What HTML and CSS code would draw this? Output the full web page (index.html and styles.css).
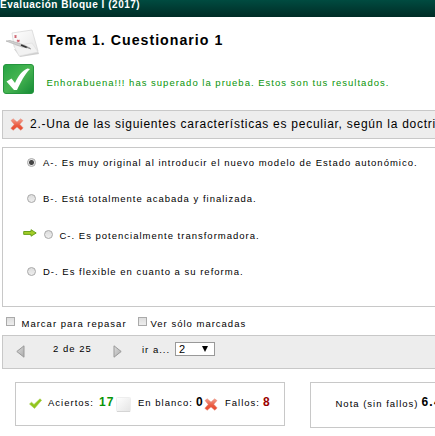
FILE: index.html
```html
<!DOCTYPE html>
<html lang="es">
<head>
<meta charset="utf-8">
<title>Evaluación Bloque I (2017)</title>
<link rel="stylesheet" href="styles.css">
</head>
<body>
<svg class="defs" width="0" height="0" aria-hidden="true">
  <defs>
    <linearGradient id="red" x1="0" y1="0" x2="0" y2="1"><stop offset="0" stop-color="#f3a08f"/><stop offset=".55" stop-color="#ea5c43"/><stop offset="1" stop-color="#e8492c"/></linearGradient>
    <linearGradient id="green" x1="0" y1="0" x2="1" y2="1"><stop offset="0" stop-color="#25a343"/><stop offset=".5" stop-color="#48b552"/><stop offset="1" stop-color="#148a35"/></linearGradient>
    <linearGradient id="gray" x1="0" y1="0" x2="1" y2="1"><stop offset="0" stop-color="#ddd"/><stop offset="1" stop-color="#aaa"/></linearGradient>
    <linearGradient id="paper" x1="0" y1="0" x2="1" y2="1"><stop offset="0" stop-color="#fff"/><stop offset="1" stop-color="#e4e4e4"/></linearGradient>
    <symbol id="cross" viewBox="0 0 14 13"><path d="M1 2.5 3.2.8 7 4 10.6.8 13 2.6 9.8 6.3 13.2 10 10.8 12.3 7 9 3.2 12.3.8 10.3 4.2 6.4Z" fill="url(#red)" stroke="#e58b7b" stroke-width=".5" stroke-linejoin="round"/></symbol>
  </defs>
</svg>
<header class="topbar">Evaluación Bloque I (2017)</header>
<section class="heading">
  <svg class="notes" width="36" height="30" viewBox="0 0 36 30">
    <path d="M9 20 15 28 34 25 33 22Z" fill="#bbb" opacity=".7"/>
    <path d="M7 4 27 1 33 22 15 27 9 17Z" fill="url(#paper)" stroke="#d4d4d4" stroke-width=".7"/>
    <path d="M9 17 14 27 33 23 27 14Z" fill="#f2f2f2" stroke="#ddd" stroke-width=".6"/>
    <path d="m9.5 6.5 2 2m0-2-2 2M12 11l2.5 2m0-2-2.5 2" fill="none" stroke="#cf6672" stroke-width="1.3"/>
    <path d="M1 12 5 11.5 19 16 25 19 17 18Z" fill="#d0d0d0" stroke="#aaa" stroke-width=".6"/>
    <path d="M16 16 22 18.5" stroke="#333" stroke-width="1.8"/><path d="m21 18 5 2" stroke="#777" stroke-width=".8"/>
  </svg>
  <h1>Tema 1. Cuestionario 1</h1>
</section>
<section class="success">
  <svg width="31" height="30" viewBox="0 0 31 30">
    <rect x=".5" y=".5" width="30" height="29" rx="2.5" fill="url(#green)" stroke="#25953d"/>
    <path d="M3.5 17.5 8.5 14.5 12 19C15 12 19 7 24.5 4.5L27 5C21 11 18 18 14 26L11 26Z" fill="#fff"/>
  </svg>
  <p>Enhorabuena!!! has superado la prueba. Estos son tus resultados.</p>
</section>
<section class="question">
  <svg width="14" height="13"><use href="#cross"/></svg>
  <h2>2.-Una de las siguientes características es peculiar, según la doctrina</h2>
</section>
<section class="options">
  <label class="option"><span class="radio on"></span><span>A-. Es muy original al introducir el nuevo modelo de Estado autonómico.</span></label>
  <label class="option"><span class="radio"></span><span>B-. Está totalmente acabada y finalizada.</span></label>
  <label class="option correct">
    <svg width="14" height="8" viewBox="0 0 14 8"><path d="M.7 2.5H8V.7L13.2 4 8 7.2V5.4H.7Z" fill="#a3cc28" stroke="#68a01c"/></svg>
    <span class="radio"></span><span>C-. Es potencialmente transformadora.</span></label>
  <label class="option"><span class="radio"></span><span>D-. Es flexible en cuanto a su reforma.</span></label>
</section>
<section class="marks">
  <span class="box"></span><span class="repasar">Marcar para repasar</span>
  <span class="box"></span><span class="marcadas">Ver sólo marcadas</span>
</section>
<nav class="pager">
  <svg class="prev" width="9" height="13" viewBox="0 0 9 13"><path d="M8 .8V12.2L.8 6.5Z" fill="url(#gray)" stroke="#999"/></svg>
  <span class="count">2 de 25</span>
  <svg class="next" width="9" height="13" viewBox="0 0 9 13"><path d="M1 .8V12.2L8.2 6.5Z" fill="url(#gray)" stroke="#999"/></svg>
  <span class="goto">ir a...</span>
  <span class="select">2<svg width="6" height="6" viewBox="0 0 6 6"><path d="M0 0H6L3 6Z"/></svg></span>
</nav>
<section class="results">
  <div class="totals">
    <svg class="tick" width="13" height="11" viewBox="0 0 13 11"><path d="M.5 6 2.5 4.2 5 6.4 11 .8 12.6 2.3 5.5 10.4Z" fill="#91c51c" stroke="#a5cd4d" stroke-width=".6"/></svg>
    <span class="ok">Aciertos:</span><b class="n17">17</b>
    <svg class="blank" width="15" height="15" viewBox="0 0 15 15"><rect x=".5" y=".5" width="14" height="14" rx="1" fill="url(#paper)" stroke="#eee"/><path d="M1 14.5H14" stroke="#d5d5d5"/></svg>
    <span class="empty">En blanco:</span><b class="n0">0</b>
    <svg class="fail" width="14" height="13"><use href="#cross"/></svg>
    <span class="wrong">Fallos:</span><b class="n8">8</b>
  </div>
  <div class="score"><span>Nota (sin fallos)</span><b>6.4</b></div>
</section>
</body>
</html>
```
FILE: styles.css
```css
* { box-sizing: border-box; }
html, body { margin: 0; height: 436px; overflow: hidden; }
body { background: #fff; color: #000; font: 9.5px/14px "Liberation Sans", Arial, sans-serif; letter-spacing: 1px; white-space: nowrap; }
svg { display: block; flex: none; }
span, b, h1, h2, p { flex: none; }
.defs { position: absolute; }
h1, h2, p { margin: 0; }
.topbar { height: 17px; background: linear-gradient(#004b40, #002c26); color: #fff; font-size: 10px; line-height: 9px; font-weight: bold; letter-spacing: .52px; }
.heading { display: flex; height: 47px; padding: 11px 0 0 5px; }
.notes { margin-top: 1px; }
h1 { margin: 3px 0 0 6px; font-size: 14.2px; line-height: 18px; letter-spacing: 1px; }
.success { display: flex; height: 46px; padding-left: 3px; color: #089408; }
.success p { margin: 12px 0 0 12.5px; }
.question { display: flex; align-items: center; height: 29px; margin-left: 2px; padding-left: 7px; border: 1px solid #c8c8c8; border-right: 0; background: #ededed; overflow: hidden; }
.question h2 { margin: -2px 0 0 6px; font-size: 12px; font-weight: normal; letter-spacing: .74px; }
.options { height: 160px; margin: 8px 0 0 2px; padding: 8px 0 0 22.5px; border: 1px solid #c8c8c8; border-right: 0; }
.option { display: flex; align-items: center; height: 14px; margin-bottom: 22.4px; }
.radio { width: 9px; height: 9px; margin: -2px 7px 0 1.5px; border: 1px solid #a8a8a8; border-radius: 50%; background: linear-gradient(#ddd, #eee); }
.radio.on { background: radial-gradient(circle, #444 0 2px, #e6e6e6 3px); }
.correct svg { margin: -6px 5px 0 -2.5px; }
.marks { display: flex; height: 28px; padding: 10px 0 0 6px; }
.box { width: 9px; height: 9px; border: 1px solid #aaa; background: linear-gradient(#ddd, #eee); }
.repasar { width: 105px; margin-left: 6.5px; }
.marcadas { margin-left: 4px; }
.repasar + .box { margin-left: 11px; }
.pager { display: flex; height: 34px; margin-left: 2px; border: 1px solid #c8c8c8; border-right: 0; background: #ededed; }
.prev { margin: 9px 0 0 13px; }
.count { width: 60px; margin: 6px 0 0 28px; }
.next { margin-top: 9px; }
.goto { width: 33px; margin: 7px 0 0 20px; }
.select { display: flex; align-items: center; justify-content: space-between; width: 40px; height: 14px; margin-top: 6px; padding: 0 6px 0 3px; border: 1px solid #999; background: #fff; font-size: 11px; letter-spacing: 0; }
.results { display: flex; margin: 13px 0 0 15px; }
.totals { display: flex; width: 270px; height: 44px; padding-left: 13px; border: 1px solid #c8c8c8; flex: none; }
.totals span { margin-top: 13px; }
b { margin-top: 12px; font-size: 12px; }
.tick { margin-top: 15px; }
.ok { width: 51px; margin-left: 6px; }
.n17 { width: 17px; color: #089408; }
.blank { margin-top: 14px; }
.empty { width: 58px; margin-left: 7px; }
.n0 { width: 8px; }
.fail { margin-top: 15px; }
.wrong { width: 38px; margin-left: 7px; }
.n8 { color: #900; }
.score { display: flex; flex: 1; min-width: 0; height: 46px; margin-left: 25px; padding-left: 24.5px; border: 1px solid #c8c8c8; border-right: 0; overflow: hidden; }
.score span { width: 86px; margin-top: 14px; }
.score b { letter-spacing: 1.2px; }
```
